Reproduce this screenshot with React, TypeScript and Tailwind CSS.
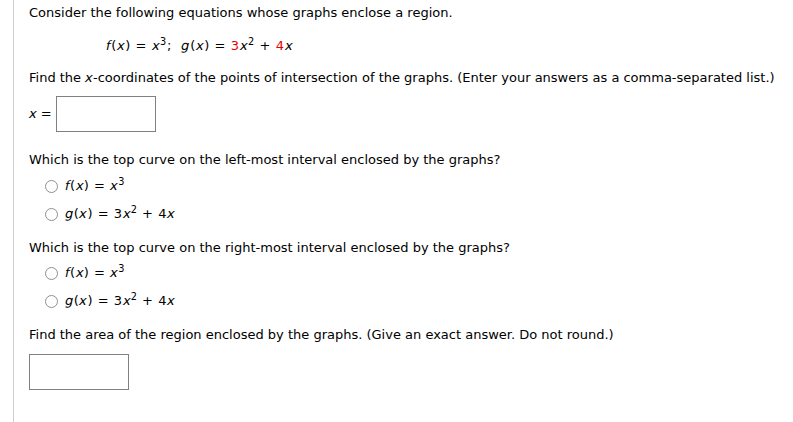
import React from "react";

const I = ({ children }: { children: React.ReactNode }) => (
  <span className="inline-block -skew-x-[12deg] not-italic">{children}</span>
);

function Radio() {
  return <span className="inline-block w-[13px] h-[13px] rounded-full border border-[#8f8f8f] bg-white shrink-0" />;
}

function Choice({ top, children }: { top: string; children: React.ReactNode }) {
  return (
    <div className={`flex items-center h-[16px] pl-[16px] gap-[7px] ${top}`}>
      <Radio />
      <span className="tracking-[0.5px] whitespace-pre">{children}</span>
    </div>
  );
}

const F = () => (
  <>
    <I>f</I>(<I>x</I>) = <I>x</I>
    <sup>3</sup>
  </>
);
const G = ({ red }: { red?: boolean }) => (
  <>
    <I>g</I>(<I>x</I>) = <span className={red ? "text-[#e60000]" : ""}>3</span>
    <I>x</I>
    <sup>2</sup> + <span className={red ? "text-[#e60000]" : ""}>4</span>
    <I>x</I>
  </>
);

export default function App() {
  return (
    <div className="w-[793px] h-[422px] bg-white overflow-hidden">
      <div
        className="ml-[13px] h-full border-l border-[#cfcfcf] pl-[15px] text-[13px] text-black leading-[16px]"
        style={{ fontFamily: '"DejaVu Sans", Verdana, sans-serif' }}
      >
        <div className="pt-[5px] h-[21px] flex items-center">Consider the following equations whose graphs enclose a region.</div>
        <div className="mt-[17px] h-[16px] flex items-center pl-[77px] whitespace-pre">
          <span className="tracking-[0.6px]">
            <F />;{"  "}<G red />
          </span>
        </div>
        <div className="mt-[16px] h-[16px] flex items-center">
          <span>
            Find the <I>x</I>-coordinates of the points of intersection of the graphs. (Enter your answers as a comma-separated list.)
          </span>
        </div>
        <div className="mt-[10px] h-[36px] flex items-center">
          <span className="w-[27px]">
            <I>x</I> =
          </span>
          <div className="w-[100px] h-[36px] border border-[#808080] bg-white" />
        </div>
        <div className="mt-[20px] h-[16px] flex items-center">Which is the top curve on the left-most interval enclosed by the graphs?</div>
        <Choice top="mt-[10px]">
          <F />
        </Choice>
        <Choice top="mt-[12px]">
          <G />
        </Choice>
        <div className="mt-[18px] h-[16px] flex items-center">Which is the top curve on the right-most interval enclosed by the graphs?</div>
        <Choice top="mt-[9px]">
          <F />
        </Choice>
        <Choice top="mt-[12px]">
          <G />
        </Choice>
        <div className="mt-[18px] h-[16px] flex items-center">Find the area of the region enclosed by the graphs. (Give an exact answer. Do not round.)</div>
        <div className="mt-[11px] w-[100px] h-[36px] border border-[#808080] bg-white" />
      </div>
    </div>
  );
}
